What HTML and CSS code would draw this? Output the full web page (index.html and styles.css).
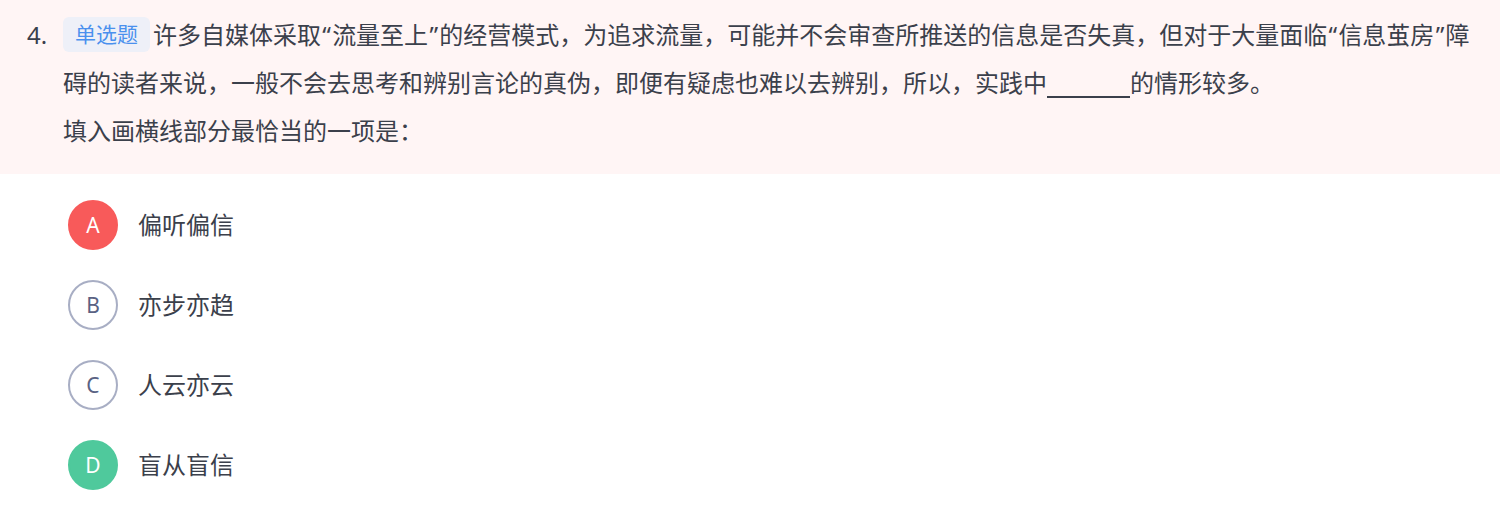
FILE: index.html
```html
<!DOCTYPE html>
<html lang="zh">
<head>
<meta charset="utf-8">
<title>单选题</title>
<link rel="stylesheet" href="styles.css">
</head>
<body>
<div class="question">
  <div class="num">4.</div>
  <div class="body">
    <p class="stem"><span class="tag">单选题</span>许多自媒体采取<span class="q">“</span>流量至上<span class="q">”</span>的经营模式，为追求流量，可能并不会审查所推送的信息是否失真，但对于大量面临<span class="q">“</span>信息茧房<span class="q">”</span>障碍的读者来说，一般不会去思考和辨别言论的真伪，即便有疑虑也难以去辨别，所以，实践中<span class="blank"></span>的情形较多。</p>
    <p class="ask">填入画横线部分最恰当的一项是：</p>
  </div>
</div>
<ul class="options">
  <li class="opt"><span class="circle wrong">A</span><span class="otext">偏听偏信</span></li>
  <li class="opt"><span class="circle">B</span><span class="otext">亦步亦趋</span></li>
  <li class="opt"><span class="circle">C</span><span class="otext">人云亦云</span></li>
  <li class="opt"><span class="circle right">D</span><span class="otext">盲从盲信</span></li>
</ul>
</body>
</html>
```
FILE: styles.css
```css
html, body {
  margin: 0;
  padding: 0;
  background: #ffffff;
}
body {
  font-family: "Noto Sans", "Noto Sans CJK SC", sans-serif;
  color: #3b404b;
  font-size: 24px;
}
.question {
  display: flex;
  background: #fff5f5;
  padding: 11px 22px 19px 27px;
}
.num {
  width: 36px;
  flex: none;
  line-height: 48px;
}
.body {
  flex: 1;
}
.stem, .ask {
  margin: 0;
  line-height: 48px;
}
.q {
  padding: 0 1.25px;
}
.tag {
  display: inline-block;
  background: #eef0f8;
  color: #4a90ee;
  font-size: 21px;
  line-height: 35px;
  height: 35px;
  padding: 0 12px;
  border-radius: 6px;
  margin-right: 3px;
  vertical-align: 2px;
}
.blank {
  display: inline-block;
  width: 83px;
  height: 24px;
  border-bottom: 2px solid #3b404b;
  vertical-align: -6px;
}
.options {
  list-style: none;
  margin: 0;
  padding: 26px 0 0 68px;
  display: flex;
  flex-direction: column;
  gap: 30px;
}
.opt {
  display: flex;
  align-items: center;
  gap: 20px;
  height: 50px;
}
.circle {
  width: 50px;
  height: 50px;
  box-sizing: border-box;
  border-radius: 50%;
  border: 2px solid #a8aec4;
  color: #5a6283;
  font-size: 21px;
  display: flex;
  align-items: center;
  justify-content: center;
}
.circle.wrong {
  background: #f85a5a;
  border-color: #f85a5a;
  color: #ffffff;
}
.circle.right {
  background: #4fc99c;
  border-color: #4fc99c;
  color: #ffffff;
}
.otext {
  line-height: 50px;
}
```
